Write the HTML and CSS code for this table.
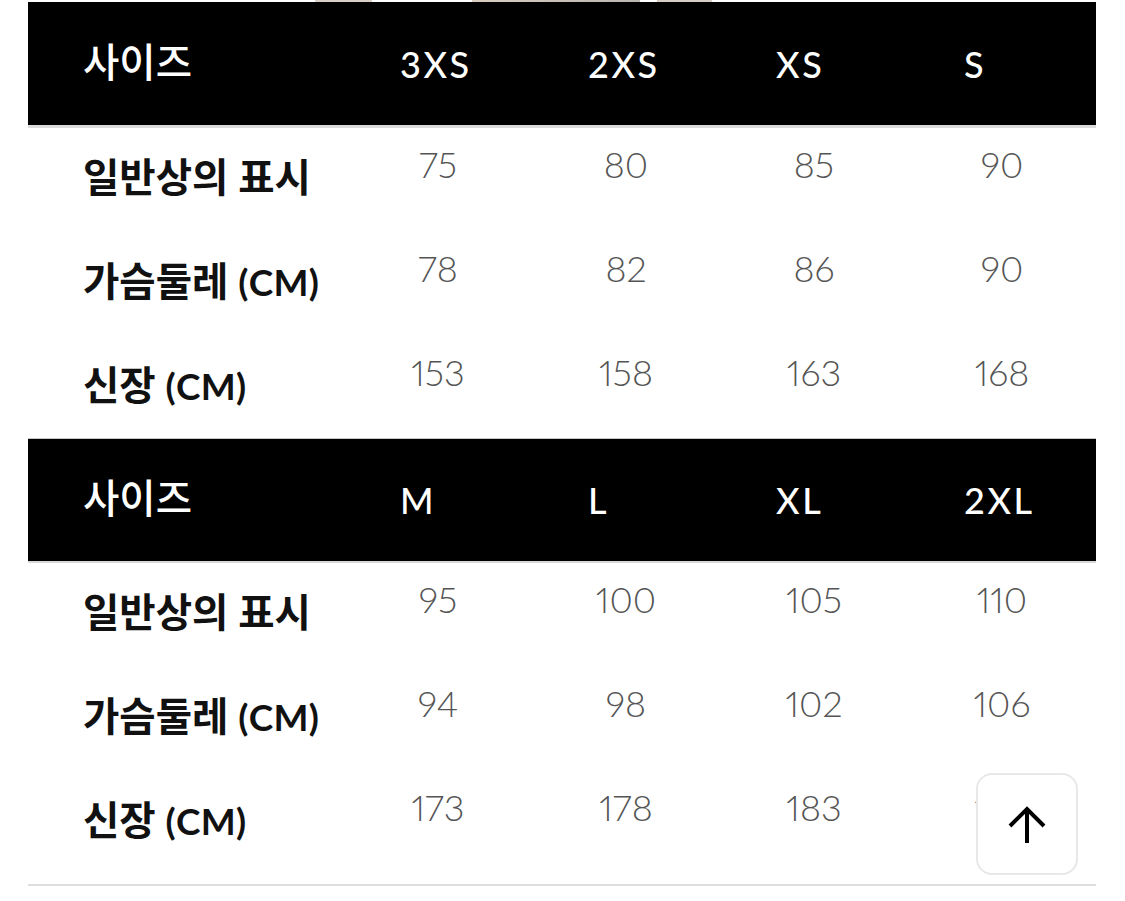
FILE: index.html
```html
<!DOCTYPE html>
<html lang="ko">
<head>
<meta charset="utf-8">
<title>사이즈 표</title>
<link rel="stylesheet" href="styles.css">
</head>
<body>
<div class="strip"></div>
<div class="chart">
  <section class="block block-first">
    <div class="row head">
      <div class="cell label">사이즈</div>
      <div class="cell size">3XS</div>
      <div class="cell size">2XS</div>
      <div class="cell size">XS</div>
      <div class="cell size">S</div>
    </div>
    <div class="row">
      <div class="cell label">일반상의 표시</div>
      <div class="cell val">75</div>
      <div class="cell val">80</div>
      <div class="cell val">85</div>
      <div class="cell val">90</div>
    </div>
    <div class="row">
      <div class="cell label">가슴둘레 <span class="unit">(CM)</span></div>
      <div class="cell val">78</div>
      <div class="cell val">82</div>
      <div class="cell val">86</div>
      <div class="cell val">90</div>
    </div>
    <div class="row">
      <div class="cell label">신장 <span class="unit">(CM)</span></div>
      <div class="cell val">153</div>
      <div class="cell val">158</div>
      <div class="cell val">163</div>
      <div class="cell val">168</div>
    </div>
  </section>
  <section class="block block-second">
    <div class="row head">
      <div class="cell label">사이즈</div>
      <div class="cell size">M</div>
      <div class="cell size">L</div>
      <div class="cell size">XL</div>
      <div class="cell size">2XL</div>
    </div>
    <div class="row">
      <div class="cell label">일반상의 표시</div>
      <div class="cell val">95</div>
      <div class="cell val">100</div>
      <div class="cell val">105</div>
      <div class="cell val">110</div>
    </div>
    <div class="row">
      <div class="cell label">가슴둘레 <span class="unit">(CM)</span></div>
      <div class="cell val">94</div>
      <div class="cell val">98</div>
      <div class="cell val">102</div>
      <div class="cell val">106</div>
    </div>
    <div class="row">
      <div class="cell label">신장 <span class="unit">(CM)</span></div>
      <div class="cell val">173</div>
      <div class="cell val">178</div>
      <div class="cell val">183</div>
      <div class="cell val">188</div>
    </div>
  </section>
</div>
<button class="to-top" type="button" aria-label="맨 위로">
  <svg width="40" height="40" viewBox="0 0 40 40" fill="none" stroke="#000" stroke-width="4">
    <path d="M20 4 V39"/>
    <path d="M3 22 L20 5 L37 22"/>
  </svg>
</button>
</body>
</html>
```

FILE: styles.css
```css
html, body {
  margin: 0;
  padding: 0;
  background: #fff;
}

body {
  font-family: "Lato", "Noto Sans CJK KR", sans-serif;
  width: 1125px;
  height: 901px;
  overflow: hidden;
}

.strip {
  height: 2px;
  background: linear-gradient(to right,
    #fff 0, #fff 315px,
    #d8cfc6 315px, #d8cfc6 372px,
    #fff 372px, #fff 472px,
    #d9cdbf 472px, #b9b5b1 640px,
    #fff 640px, #fff 657px,
    #d6cdc4 657px, #d6cdc4 712px,
    #fff 712px);
}

.chart {
  margin-left: 28px;
  width: 1068px;
}

.row {
  display: grid;
  grid-template-columns: 316px repeat(4, 188px);
  height: 104px;
  align-items: start;
}

.row.head {
  background: #000;
  color: #fff;
  height: 123px;
  align-items: center;
  border-bottom: 3px solid #dcdcdc;
}

.block-second {
  border-bottom: 2px solid #dedede;
  padding-bottom: 9px;
}

.block-second .row.head {
  height: 122px;
  border-top: 1px solid #c8c8c8;
  border-bottom: 2px solid #d8d8d8;
}

.block-first .row:last-child {
  height: 102px;
}

.cell {
  font-size: 36px;
  line-height: 36px;
  white-space: nowrap;
}

.label {
  padding-left: 55px;
  font-size: 39.5px;
  font-weight: 600;
  color: #111;
  padding-top: 31px;
}

.unit {
  font-size: 37px;
  font-weight: 700;
  letter-spacing: 0.3px;
}

.head .label {
  font-weight: 500;
  color: #fff;
  padding-top: 0;
  margin-top: -4px;
}

.size {
  padding-left: 56px;
  font-weight: 500;
  letter-spacing: 2.6px;
}

.val {
  text-align: center;
  font-weight: 300;
  color: #555;
  padding-top: 18px;
  font-variant-numeric: proportional-nums;
}

.to-top {
  position: absolute;
  left: 976px;
  top: 773px;
  width: 102px;
  height: 102px;
  padding: 0;
  margin: 0;
  background: #fff;
  border: 2px solid #e8e8e8;
  border-radius: 16px;
  display: flex;
  align-items: center;
  justify-content: center;
  cursor: pointer;
}

.to-top svg {
  display: block;
}
```
